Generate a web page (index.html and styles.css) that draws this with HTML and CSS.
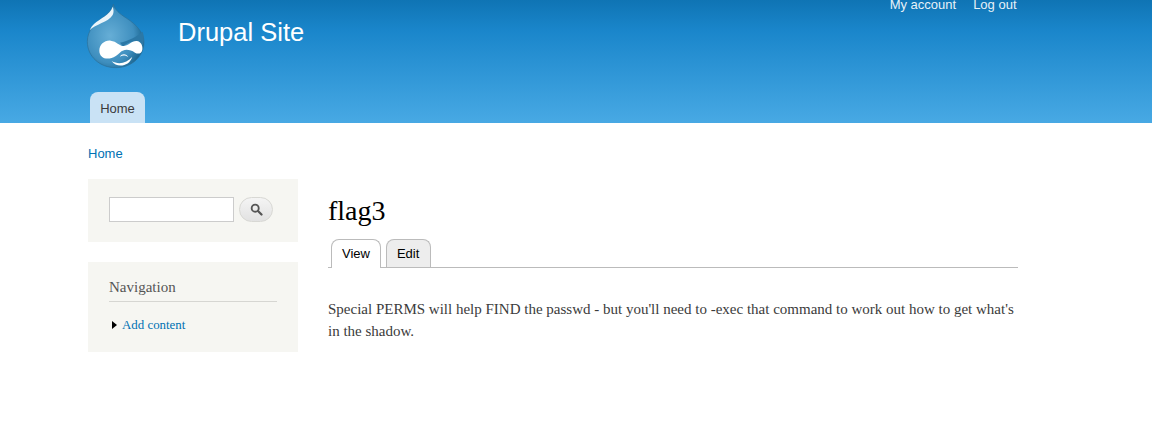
FILE: index.html
```html
<!DOCTYPE html>
<html lang="en">
<head>
    <meta charset="UTF-8">
    <title>flag3 | Drupal Site</title>
    <link rel="stylesheet" href="styles.css">
</head>
<body>
    <header class="site-header">
        <div class="header-top">
            <svg class="logo" width="60" height="69" viewBox="48 0 180 207">
                <defs>
                    <radialGradient id="drop" cx="0.4" cy="0.5" r="0.6">
                        <stop offset="0" stop-color="#66aed6"/>
                        <stop offset="0.7" stop-color="#3f8fbf"/>
                        <stop offset="1" stop-color="#1c6792"/>
                    </radialGradient>
                </defs>
                <path d="M130 12C134 30 150 42 170 55C200 74 222 100 222 125C222 170 185 203 137 203C90 203 52 170 52 125C52 90 75 70 100 52C115 41 126 30 130 12Z" fill="url(#drop)" stroke="#2a6f98" stroke-width="2"/>
                <path d="M150 128C175 122 200 110 218 95C224 115 222 130 216 140C200 115 175 125 160 140Z" fill="#2c78a6"/>
                <path d="M128 20C120 45 90 55 72 72C62 82 60 90 60 90C75 72 115 68 128 45C132 36 131 28 128 20Z" fill="#eaf4fa"/>
                <path d="M88 152C88 133 105 120 122 122C140 124 148 138 160 138C175 138 185 122 200 123C213 124 219 138 217 149C215 160 205 164 195 158C182 150 170 147 158 152C148 156 143 168 125 174C105 180 88 171 88 152Z" fill="#fff"/>
                <path d="M125 183C145 195 170 190 187 170C178 200 140 205 125 183Z" fill="#fff"/>
                <path d="M150 170C155 160 170 160 175 172C168 165 158 165 150 170Z" fill="#fff"/>
            </svg>
            <a class="site-name" href="#">Drupal Site</a>
            <ul class="account-menu">
                <li><a href="#">My account</a></li>
                <li><a href="#">Log out</a></li>
            </ul>
        </div>
        <nav class="main-menu">
            <a class="main-tab" href="#">Home</a>
        </nav>
    </header>

    <div class="breadcrumb"><a href="#">Home</a></div>

    <div class="page-columns">
        <aside class="sidebar">
            <div class="block search-block">
                <input class="search-input" type="text">
                <button class="search-btn" type="button" aria-label="Search">
                    <svg class="search-icon" width="14" height="14" viewBox="0 0 14 14">
                        <circle cx="5.6" cy="5.6" r="3.8" fill="none" stroke="#555" stroke-width="2"/>
                        <path d="M8.6 8.6L12.4 12.4" stroke="#555" stroke-width="2.4" stroke-linecap="round"/>
                    </svg>
                </button>
            </div>
            <div class="block nav-block">
                <h2 class="block-title">Navigation</h2>
                <ul class="nav-list">
                    <li><a href="#">Add content</a></li>
                </ul>
            </div>
        </aside>

        <main class="content">
            <h1 class="page-title">flag3</h1>
            <ul class="tabs">
                <li class="tab active"><a href="#">View</a></li>
                <li class="tab"><a href="#">Edit</a></li>
            </ul>
            <p class="body-text">Special PERMS will help FIND the passwd - but you'll need to -exec that command to work out how to get what's in the shadow.</p>
        </main>
    </div>
</body>
</html>
```

FILE: styles.css
```css
body {
    margin: 0;
    font-family: "Liberation Serif", Georgia, serif;
    font-size: 15px;
    color: #3b3b3b;
    background-color: #fff;
}

a {
    color: #0071b3;
    text-decoration: none;
}

ul {
    list-style: none;
    margin: 0;
    padding: 0;
}

/* Header */
.site-header {
    height: 123px;
    padding-left: 86px;
    box-sizing: border-box;
    background: linear-gradient(to bottom, #0f74b4 0%, #1a86cb 25%, #48a9e4 100%);
    font-family: "Liberation Sans", Arial, sans-serif;
}

.header-top {
    display: flex;
    align-items: flex-start;
    height: 92px;
}

.logo {
    display: block;
}

.site-name {
    margin-left: 32px;
    margin-top: 17px;
    font-size: 25.5px;
    line-height: 30px;
    color: #fff;
}

.account-menu {
    display: flex;
    gap: 17px;
    margin-left: auto;
    margin-right: 135.5px;
    font-size: 13px;
    line-height: 10px;
}

.account-menu a {
    color: #e6f1f8;
}

.main-menu {
    display: flex;
    padding-left: 4px;
}

.main-tab {
    display: block;
    width: 55px;
    height: 31px;
    line-height: 33px;
    text-align: center;
    font-size: 13px;
    color: #3b3b3b;
    background-color: #c9e2f5;
    border-radius: 8px 8px 0 0;
}

/* Breadcrumb */
.breadcrumb {
    padding: 23px 0 0 88px;
    font-family: "Liberation Sans", Arial, sans-serif;
    font-size: 13px;
    line-height: 16px;
}

/* Columns */
.page-columns {
    display: flex;
    gap: 30px;
    margin-top: 17px;
    padding: 0 134px 0 88px;
}

.sidebar {
    width: 210px;
    flex-shrink: 0;
}

.block {
    background-color: #f6f6f2;
    box-sizing: border-box;
    padding: 0 21px;
}

.search-block {
    display: flex;
    align-items: flex-start;
    height: 63px;
    padding-top: 18px;
    margin-bottom: 20px;
}

.search-input {
    width: 125px;
    height: 25px;
    box-sizing: border-box;
    border: 1px solid #ccc;
    background-color: #fff;
    padding: 0;
}

.search-btn {
    display: flex;
    align-items: center;
    justify-content: center;
    width: 34px;
    height: 25px;
    margin-left: 5px;
    padding: 0 0 1px;
    border: 1px solid #d8d8d4;
    border-radius: 13px;
    background: linear-gradient(to bottom, #f4f4f4, #e2e2e2);
}

.search-icon {
    width: 13px;
    height: 13px;
}

.nav-block {
    height: 90px;
    padding-top: 16px;
}

.block-title {
    margin: 0;
    padding-bottom: 4px;
    font-size: 15px;
    font-weight: normal;
    line-height: 19px;
    color: #555;
    border-bottom: 1px solid #d6d6d2;
}

.nav-list {
    margin-top: 15px;
    font-size: 12.9px;
    line-height: 16px;
}

.nav-list li {
    position: relative;
    padding-left: 13px;
}

/* little black arrow in front of the link */
.nav-list li::before {
    content: "";
    position: absolute;
    left: 3px;
    top: 4px;
    border-left: 5px solid #000;
    border-top: 4px solid transparent;
    border-bottom: 4px solid transparent;
}

/* Main content */
.content {
    flex: 1;
    min-width: 0;
}

.page-title {
    margin: 15px 0 0;
    font-size: 28px;
    font-weight: normal;
    line-height: 34px;
    color: #000;
}

.tabs {
    display: flex;
    gap: 5px;
    margin-top: 11px;
    padding-left: 3px;
    height: 28px;
    border-bottom: 1px solid #bbb;
    font-family: "Liberation Sans", Arial, sans-serif;
    font-size: 13px;
}

.tab {
    height: 28px;
    box-sizing: border-box;
    border: 1px solid #bbb;
    border-bottom: 0;
    border-radius: 8px 8px 0 0;
    background-color: #ededed;
    padding: 0 10px;
    line-height: 28px;
}

.tab.active {
    height: 29px;
    background-color: #fff;
}

.tab + .tab {
    padding-right: 11px;
}

.tab a {
    color: #000;
}

.body-text {
    margin: 30px 0 0;
    font-size: 15px;
    line-height: 22px;
}
```
